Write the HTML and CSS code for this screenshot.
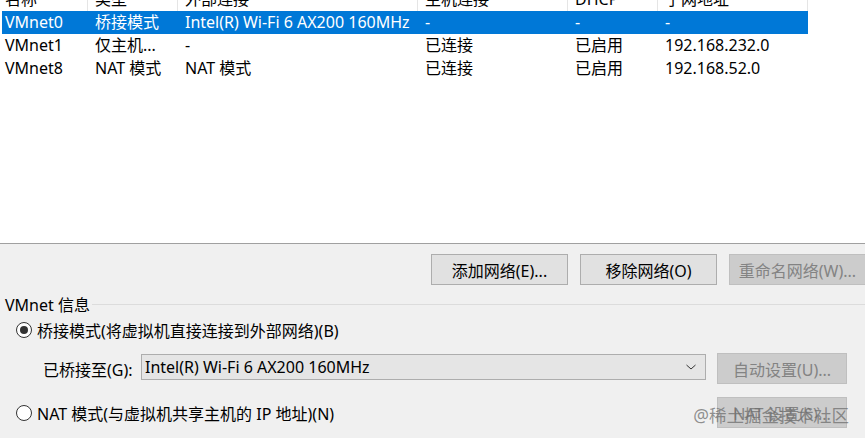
FILE: index.html
```html
<!DOCTYPE html>
<html lang="zh-CN">
<head>
  <meta charset="UTF-8">
  <title>虚拟网络编辑器</title>
  <link rel="stylesheet" href="styles.css">
</head>
<body>
  <div class="list">
    <div class="row head">
      <div class="cell">名称</div>
      <div class="cell">类型</div>
      <div class="cell">外部连接</div>
      <div class="cell">主机连接</div>
      <div class="cell">DHCP</div>
      <div class="cell">子网地址</div>
    </div>
    <div class="row selected">
      <div class="cell">VMnet0</div>
      <div class="cell">桥接模式</div>
      <div class="cell">Intel(R) Wi-Fi 6 AX200 160MHz</div>
      <div class="cell">-</div>
      <div class="cell">-</div>
      <div class="cell">-</div>
    </div>
    <div class="row">
      <div class="cell">VMnet1</div>
      <div class="cell">仅主机...</div>
      <div class="cell">-</div>
      <div class="cell">已连接</div>
      <div class="cell">已启用</div>
      <div class="cell">192.168.232.0</div>
    </div>
    <div class="row">
      <div class="cell">VMnet8</div>
      <div class="cell">NAT 模式</div>
      <div class="cell">NAT 模式</div>
      <div class="cell">已连接</div>
      <div class="cell">已启用</div>
      <div class="cell">192.168.52.0</div>
    </div>
  </div>

  <div class="panel">
    <div class="actions">
      <button class="btn">添加网络(E)...</button>
      <button class="btn">移除网络(O)</button>
      <button class="btn disabled">重命名网络(W)...</button>
    </div>

    <div class="group-title">
      <span>VMnet 信息</span>
      <div class="rule"></div>
    </div>

    <div class="option">
      <span class="radio checked"></span>
      <span>桥接模式(将虚拟机直接连接到外部网络)(B)</span>
    </div>

    <div class="bridge">
      <span class="bridge-label">已桥接至(G):</span>
      <div class="combo">
        <span>Intel(R) Wi-Fi 6 AX200 160MHz</span>
        <svg width="12" height="8" viewBox="0 0 12 8"><path d="M1.5 2 L6 6 L10.5 2" fill="none" stroke="#333" stroke-width="1"/></svg>
      </div>
      <button class="btn disabled side">自动设置(U)...</button>
    </div>

    <div class="option nat">
      <span class="radio"></span>
      <span class="nat-text">NAT 模式(与虚拟机共享主机的 IP 地址)(N)</span>
      <button class="btn disabled side">NAT 设置(S)...</button>
    </div>

    <div class="watermark">@稀土掘金技术社区</div>
  </div>
</body>
</html>
```

FILE: styles.css
```css
html, body {
  margin: 0;
  height: 100%;
  overflow: hidden;
}
body {
  font-family: "Noto Sans", "Noto Sans CJK SC", sans-serif;
  font-size: 16px;
  color: #000;
  background: #f0f0f0;
  display: flex;
  flex-direction: column;
}
.list {
  background: #fff;
  height: 244px;
  padding-left: 2px;
  box-sizing: border-box;
  border-bottom: 1px solid #a0a0a0;
}
.row {
  display: grid;
  grid-template-columns: 86px 90px 240px 150px 90px 150px;
  height: 23px;
  line-height: 23px;
  white-space: nowrap;
}
.row .cell {
  padding-left: 7px;
  overflow: hidden;
}
.row .cell:first-child {
  padding-left: 3px;
}
.head {
  margin-top: -12px;
}
.head .cell {
  border-right: 1px solid #e5e5e5;
}
.selected {
  background: #0078d7;
  color: #fff;
  width: 806px;
}
.panel {
  position: relative;
  flex: 1;
  padding: 10px 0 0 0;
}
.actions {
  display: flex;
  justify-content: flex-end;
  gap: 12px;
  margin-right: -1px;
}
.btn {
  width: 137px;
  height: 31px;
  font-family: inherit;
  font-size: 16px;
  background: #e1e1e1;
  border: 1px solid #adadad;
  color: #000;
  padding: 0;
}
.btn.disabled {
  background: #cccccc;
  border-color: #bfbfbf;
  color: #838383;
}
.group-title {
  display: flex;
  align-items: center;
  margin-top: 9px;
  height: 20px;
}
.group-title span {
  padding: 0 2px 0 5px;
}
.group-title .rule {
  flex: 1;
  border-top: 1px solid #dcdcdc;
  margin-top: 1px;
}
.option {
  display: flex;
  align-items: center;
  gap: 5px;
  padding-left: 16px;
  height: 22px;
  margin-top: 5px;
}
.radio {
  width: 16px;
  height: 16px;
  border: 1px solid #333;
  border-radius: 50%;
  background: #fff;
  box-sizing: border-box;
  position: relative;
}
.radio.checked::after {
  content: "";
  position: absolute;
  left: 3px;
  top: 3px;
  width: 8px;
  height: 8px;
  border-radius: 50%;
  background: #333;
}
.bridge {
  display: flex;
  align-items: center;
  margin-top: 12px;
  padding-left: 43px;
  height: 31px;
}
.bridge-label {
  width: 98px;
}
.combo {
  width: 565px;
  height: 26px;
  box-sizing: border-box;
  border: 1px solid #adadad;
  background: #e5e5e5;
  display: flex;
  align-items: center;
  justify-content: space-between;
  padding: 0 8px 0 3px;
  margin-bottom: 4px;
}
.side {
  width: 130px;
  margin-left: 11px;
}
.nat {
  margin-top: 13px;
  height: 31px;
}
.nat-text {
  width: 675px;
}
.nat .side {
  margin-left: 0;
}
.watermark {
  position: absolute;
  right: 16px;
  bottom: 11px;
  font-size: 17.5px;
  color: rgba(110, 110, 110, 0.75);
}
```
